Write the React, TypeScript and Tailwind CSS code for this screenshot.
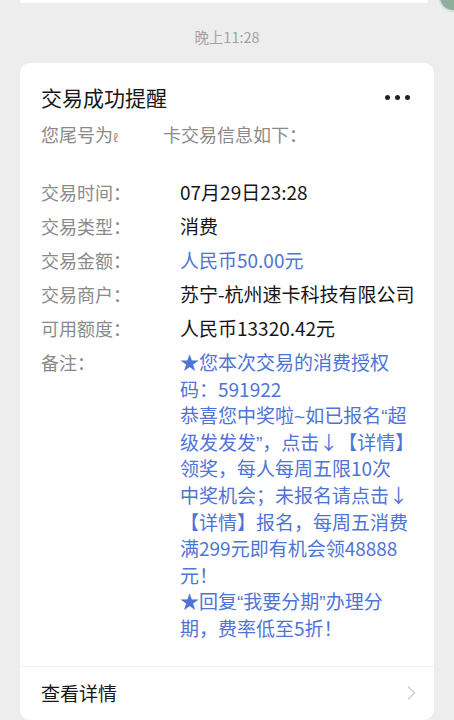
import React from "react";

const FONT = { fontFamily: '"Noto Sans CJK SC", "Noto Sans", sans-serif' };

const rows: { label: string; value: string; blue?: boolean }[] = [
  { label: "交易时间：", value: "07月29日23:28" },
  { label: "交易类型：", value: "消费" },
  { label: "交易金额：", value: "人民币50.00元", blue: true },
  { label: "交易商户：", value: "苏宁-杭州速卡科技有限公司" },
  { label: "可用额度：", value: "人民币13320.42元" },
];

// narrow western quotes / tilde, as the phone font draws them
function Q({ c }: { c: string }) {
  return <span className="leading-none" style={{ fontFamily: '"Liberation Sans", sans-serif' }}>{c}</span>;
}

const remark: React.ReactNode[] = [
  "★您本次交易的消费授权",
  "码：591922",
  <>恭喜您中奖啦<Q c="~" />如已报名<Q c="“" />超</>,
  <>级发发发<Q c="”" />，点击↓【详情】</>,
  "领奖，每人每周五限10次",
  "中奖机会；未报名请点击↓",
  "【详情】报名，每周五消费",
  "满299元即有机会领48888",
  "元！",
  <>★回复<Q c="“" />我要分期<Q c="”" />办理分</>,
  "期，费率低至5折！",
];

export default function App() {
  return (
    <div className="relative h-[720px] w-[454px] overflow-hidden bg-[#ededed]" style={FONT}>
      {/* tail of the previous message */}
      <div className="mx-[20px] h-[3px] w-[408px] rounded-b-[10px] bg-white" />
      <div className="absolute right-[-14px] top-[-18px] h-[30px] w-[30px] rounded-full border-2 border-[#dcdcdc] bg-[#8fae9c]" />

      <div className="pt-[24px] text-center text-[14.5px] leading-[20px] text-[#a3a3a3]">晚上11:28</div>

      <div className="mx-[20px] mt-[16px] w-[414px] rounded-[10px] bg-white">
        <div className="px-[21px] pt-[20px]">
          <div className="flex items-center justify-between">
            <div className="text-[21px] leading-[28px] text-[#161616]">交易成功提醒</div>
            <div className="mr-[3px] flex gap-[5px]">
              <span className="h-[5px] w-[5px] rounded-full bg-[#222]" />
              <span className="h-[5px] w-[5px] rounded-full bg-[#222]" />
              <span className="h-[5px] w-[5px] rounded-full bg-[#222]" />
            </div>
          </div>
          <div className="mt-[6px] flex text-[18px] leading-[34px] text-[#8a8a8a]">
            <span className="w-[122px]">
              您尾号为<span className="text-[11px]">ℓ</span>
            </span>
            <span>卡交易信息如下：</span>
          </div>

          <div className="mt-[21px]">
            {rows.map((r) => (
              <div key={r.label} className="flex h-[34px] leading-[34px]">
                <span className="w-[139px] shrink-0 text-[18px] text-[#8a8a8a]">{r.label}</span>
                <span
                  className={
                    r.blue
                      ? "whitespace-nowrap text-[19px] text-[#4f74d6]"
                      : "whitespace-nowrap text-[19px] text-[#161616]"
                  }
                >
                  {r.value}
                </span>
              </div>
            ))}
            <div className="flex pt-[4px] leading-[26.6px]">
              <span className="w-[139px] shrink-0 text-[18px] text-[#8a8a8a]">备注：</span>
              <div className="text-[19px] text-[#4f74d6]">
                {remark.map((l, i) => (
                  <div key={i} className="h-[26.6px] whitespace-nowrap">{l}</div>
                ))}
              </div>
            </div>
          </div>
        </div>

        <div className="mt-[24px] border-t border-[#f0f0f0]" />
        <div className="flex h-[53px] items-center justify-between pl-[21px] pr-[18px]">
          <span className="text-[19px] text-[#161616]">查看详情</span>
          <svg width="10" height="16" viewBox="0 0 10 16" fill="none">
            <path d="M2 1.5 L8.5 8 L2 14.5" stroke="#d2d2d2" strokeWidth="1.6" />
          </svg>
        </div>
      </div>
    </div>
  );
}
